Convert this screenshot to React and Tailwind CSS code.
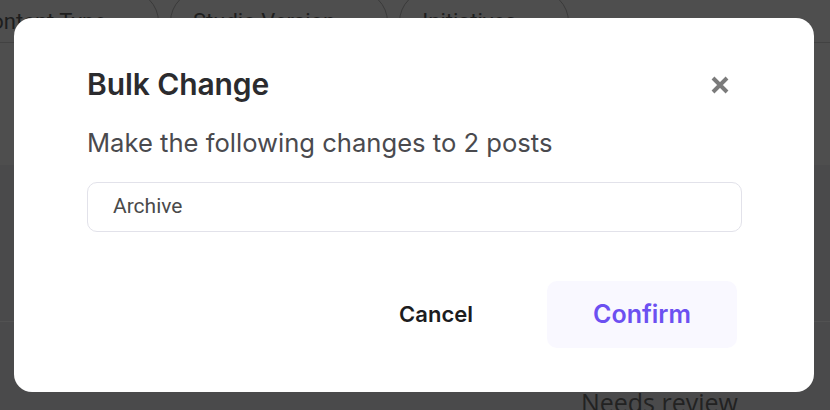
import React from "react";

const pills = ["Content Type", "Studio Version", "Initiatives"];

function Caret() {
  return (
    <svg width="22" height="8" viewBox="0 0 22 8" className="ml-[8px]">
      <path d="M3 6 L6 2 L9 6 Z" fill="#1e1e1e" />
      <path d="M14 2 L17 6 L20 2 Z" fill="#1e1e1e" />
    </svg>
  );
}

export default function App() {
  return (
    <div className="relative w-[830px] h-[410px] overflow-hidden bg-[#4a4a4b]" style={{ fontFamily: "Inter, 'Noto Sans', sans-serif" }}>
      {/* page behind the overlay */}
      <div className="h-[165px] bg-[#4e4e4e]">
        <div className="h-[43px] border-b border-[#424242] flex items-end gap-[11px] -ml-[46px] overflow-hidden">
          {pills.map((p) => (
            <div
              key={p}
              className="h-[64px] -mb-[12px] flex items-center px-[22px] rounded-full border border-[#3a3a3a] text-[22px] text-[#1e1e1e]"
              style={{ fontFamily: "Roboto, sans-serif" }}
            >
              <span className="-mt-[2px]">{p}</span>
              <Caret />
            </div>
          ))}
        </div>
      </div>
      <div className="h-[157px] border-b border-[#525252]" />
      <div className="flex justify-end pr-[92px] pt-[62px] text-[25px] text-[#222]" style={{ fontFamily: "'Open Sans', sans-serif" }}>
        Needs review
      </div>

      {/* modal */}
      <div className="absolute left-[14px] top-[18px] w-[800px] h-[374px] bg-white rounded-[18px] pl-[73px] pr-[72px] pt-[48px] flex flex-col">
        <div className="flex items-center justify-between">
          <h2 className="text-[30px] leading-[36px] font-semibold text-[#2b2b2e] tracking-[-0.1px]">Bulk Change</h2>
          <svg width="20" height="20" viewBox="0 0 20 20" className="mr-[12px] mt-[2px]">
            <path d="M3 3 L17 17 M17 3 L3 17" stroke="#7b7b7b" strokeWidth="4" strokeLinecap="butt" />
          </svg>
        </div>
        <p className="mt-[26px] text-[25.6px] leading-[30px] text-[#4a4a4e]">Make the following changes to 2 posts</p>
        <div
          className="mt-[24px] h-[50px] rounded-[10px] border border-[#e2e2ea] flex items-center pl-[25px] text-[21px] text-[#4a4a4a]"
          style={{ fontFamily: "Roboto, sans-serif" }}
        >
          Archive
        </div>
        <div className="mt-[49px] flex justify-end items-center gap-[37px]">
          <button className="h-[67px] px-[37px] text-[22px] font-semibold text-[#1c1c1e]">Cancel</button>
          <button className="h-[67px] w-[190px] mr-[5px] rounded-[10px] bg-[#f9f8ff] text-[25px] font-semibold text-[#6c50f1]">Confirm</button>
        </div>
      </div>
    </div>
  );
}
